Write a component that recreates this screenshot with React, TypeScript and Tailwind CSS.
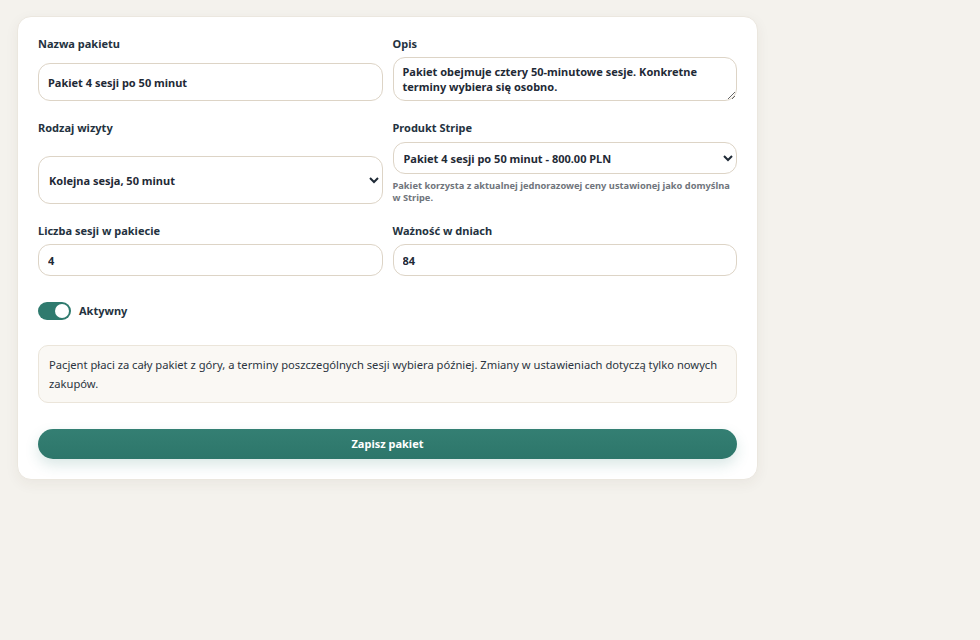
import React from "react";

const font = { fontFamily: '"Noto Sans", "Open Sans", sans-serif' };

function Label({ children }: { children: React.ReactNode }) {
  return <label className="block text-[11px] leading-[14px] font-bold text-[#243240]">{children}</label>;
}

export default function App() {
  return (
    <div className="min-h-[640px] w-full bg-[#f4f2ed] pt-4 pl-[17px]" style={font}>
      <div className="w-[741px] rounded-[14px] border border-[#ebe7df] bg-white px-5 pt-5 pb-5 shadow-[0_4px_14px_rgba(60,50,30,0.06)]">
        <div className="grid grid-cols-2 gap-x-[10px] gap-y-5">
          <div className="flex flex-col justify-between">
            <Label>Nazwa pakietu</Label>
            <input
              readOnly
              value="Pakiet 4 sesji po 50 minut"
              className="h-[38px] w-full rounded-[12px] border border-[#ddd4c6] bg-white px-[9px] text-[11px] font-bold text-[#1f2a36] outline-none"
            />
          </div>
          <div className="flex flex-col gap-[6px]">
            <Label>Opis</Label>
            <textarea
              readOnly
              value="Pakiet obejmuje cztery 50-minutowe sesje. Konkretne terminy wybiera się osobno."
              className="block h-[44px] w-full rounded-[12px] border border-[#ddd4c6] bg-white px-[9px] pt-[6px] text-[11px] leading-[15px] font-bold text-[#1f2a36] outline-none"
            />
          </div>

          <div className="flex flex-col justify-between">
            <Label>Rodzaj wizyty</Label>
            <select
              defaultValue="a"
              className="h-[48px] w-full rounded-[12px] border border-[#ddd4c6] bg-white pl-[6px] pr-[6px] text-[11px] font-bold text-[#1f2a36] outline-none"
            >
              <option value="a">Kolejna sesja, 50 minut</option>
            </select>
          </div>
          <div className="flex flex-col">
            <Label>Produkt Stripe</Label>
            <select
              defaultValue="a"
              className="mt-[7px] h-[32px] w-full rounded-[12px] border border-[#ddd4c6] bg-white pl-[6px] pr-[6px] text-[11px] font-bold text-[#1f2a36] outline-none"
            >
              <option value="a">Pakiet 4 sesji po 50 minut - 800.00 PLN</option>
            </select>
            <p className="mt-[6px] text-[9.3px] leading-[12px] font-bold text-[#70757c]">
              Pakiet korzysta z aktualnej jednorazowej ceny ustawionej jako domyślna w Stripe.
            </p>
          </div>

          <div className="flex flex-col gap-[6px]">
            <Label>Liczba sesji w pakiecie</Label>
            <input
              readOnly
              value="4"
              className="h-[32px] w-full rounded-[12px] border border-[#ddd4c6] bg-white px-[9px] text-[11px] font-bold text-[#1f2a36] outline-none"
            />
          </div>
          <div className="flex flex-col gap-[6px]">
            <Label>Ważność w dniach</Label>
            <input
              readOnly
              value="84"
              className="h-[32px] w-full rounded-[12px] border border-[#ddd4c6] bg-white px-[9px] text-[11px] font-bold text-[#1f2a36] outline-none"
            />
          </div>
        </div>

        <div className="mt-[26px] flex items-center gap-2">
          <div className="flex h-[18px] w-[33px] items-center justify-end rounded-full bg-[#2f7a6e] px-[2px]">
            <div className="h-[14px] w-[14px] rounded-full bg-white" />
          </div>
          <span className="text-[11px] font-bold text-[#243240]">Aktywny</span>
        </div>

        <div className="mt-[25px] rounded-[10px] border border-[#ebe5da] bg-[#faf8f4] px-[10px] py-[9px] text-[11.2px] leading-[19px] text-[#2a3440]">
          Pacjent płaci za cały pakiet z góry, a terminy poszczególnych sesji wybiera później. Zmiany w ustawieniach dotyczą tylko nowych zakupów.
        </div>

        <button className="mt-[26px] flex h-[30px] w-full items-center justify-center rounded-full bg-gradient-to-b from-[#347f73] to-[#2d766a] text-[11px] font-bold text-white shadow-[0_6px_14px_rgba(47,122,110,0.18)]">
          Zapisz pakiet
        </button>
      </div>
    </div>
  );
}
